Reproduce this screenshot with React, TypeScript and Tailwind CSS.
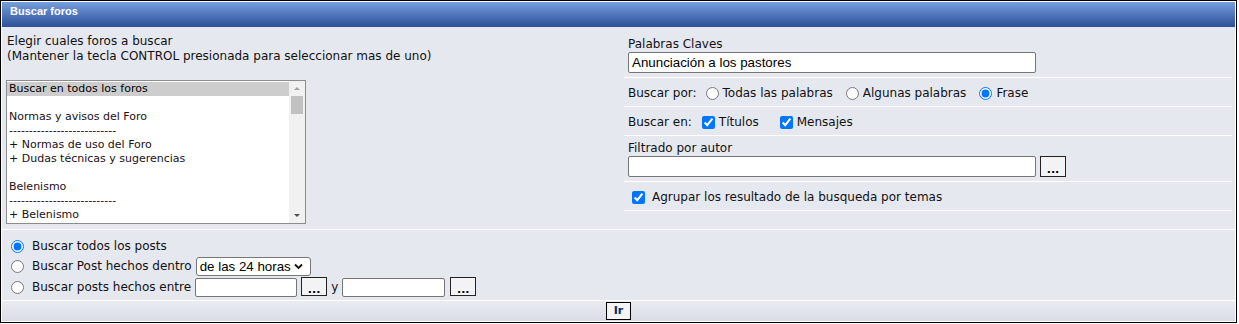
import React from "react";

const foros = [
  "Buscar en todos los foros",
  "",
  "Normas y avisos del Foro",
  "---------------------------",
  "+ Normas de uso del Foro",
  "+ Dudas técnicas y sugerencias",
  "",
  "Belenismo",
  "---------------------------",
  "+ Belenismo",
];

function DotsButton() {
  return (
    <button className="w-[26px] h-[19px] border border-[#222] bg-[#f3f3f5] text-[11px] font-bold leading-[19px] pt-[2px] font-['DejaVu_Sans',sans-serif] text-black">
      ...
    </button>
  );
}

export default function App() {
  return (
    <div className="w-[1237px] h-[323px] border border-black bg-white p-px flex flex-col font-['DejaVu_Sans',sans-serif] text-[12px] leading-[15px] text-[#111]">
      <div className="h-[25px] shrink-0 bg-linear-to-b from-[#769fde] to-[#2d5096] pl-[8px] pt-[2px] text-white text-[11px] font-bold leading-[14px] font-['Liberation_Sans',Arial,sans-serif]">
        Buscar foros
      </div>

      <div className="h-[202px] shrink-0 bg-[#e6e8f0] flex">
        <div className="w-[622px] pl-[4px] pt-[7px]">
          <div className="pl-[1px]">
            Elegir cuales foros a buscar
            <br />
            (Mantener la tecla CONTROL presionada para seleccionar mas de uno)
          </div>
          <div className="mt-[16px] w-[300px] h-[144px] border border-[#8c8c8c] bg-white flex">
            <div className="flex-1 overflow-hidden pt-px text-[11px] leading-[14px] text-[#1c1016]">
              {foros.map((f, i) => (
                <div
                  key={i}
                  className={
                    "h-[14px] pl-[2px] whitespace-pre " +
                    (i === 0 ? "bg-[#cdcdcd] text-black" : "")
                  }
                >
                  {f}
                </div>
              ))}
            </div>
            <div className="w-[16px] bg-[#f1f1f1] flex flex-col items-center">
              <svg width="16" height="14" viewBox="0 0 16 14">
                <path d="M5 9 L8 6 L11 9 Z" fill="#a3a3a3" />
              </svg>
              <div className="mt-[1px] w-[12px] h-[18px] bg-[#c1c1c1]" />
              <div className="flex-1" />
              <svg width="16" height="14" viewBox="0 0 16 14">
                <path d="M5 5 L8 8 L11 5 Z" fill="#505050" />
              </svg>
            </div>
          </div>
        </div>

        <div className="w-[608px] pt-[6px]">
          <div className="h-[45px] border-b border-white pl-[4px] pt-[4px]">
            <div>Palabras Claves</div>
            <div className="w-[408px] h-[21px] border border-[#767676] rounded-[2px] bg-white pl-[3px] flex items-center font-['Liberation_Sans',Arial,sans-serif] text-[13.33px] text-black">
              Anunciación a los pastores
            </div>
          </div>
          <div className="h-[29px] border-b border-white pl-[4px] pt-[3px] flex items-center">
            <span>Buscar por:</span>
            <input type="radio" name="por" className="ml-[9px] m-0 size-[13px]" />
            <span className="ml-[4px]">Todas las palabras</span>
            <input type="radio" name="por" className="ml-[13px] m-0 size-[13px]" />
            <span className="ml-[4px]">Algunas palabras</span>
            <input type="radio" name="por" defaultChecked className="ml-[13px] m-0 size-[13px]" />
            <span className="ml-[4px]">Frase</span>
          </div>
          <div className="h-[29px] border-b border-white pl-[4px] pt-[3px] flex items-center">
            <span>Buscar en:</span>
            <input type="checkbox" defaultChecked className="ml-[10px] m-0 size-[13px]" />
            <span className="ml-[4px]">Títulos</span>
            <input type="checkbox" defaultChecked className="ml-[21px] m-0 size-[13px]" />
            <span className="ml-[4px]">Mensajes</span>
          </div>
          <div className="h-[46px] border-b border-white pl-[4px] pt-[5px]">
            <div>Filtrado por autor</div>
            <div className="flex gap-[4px]">
              <div className="w-[408px] h-[21px] border border-[#767676] rounded-[2px] bg-white" />
              <button className="w-[26px] h-[21px] border border-[#222] bg-[#f3f3f5] text-[11px] font-bold leading-[21px] pt-[2px] text-black">
                ...
              </button>
            </div>
          </div>
          <div className="h-[29px] border-b border-white pl-[8px] pt-[2px] flex items-center">
            <input type="checkbox" defaultChecked className="m-0 size-[13px]" />
            <span className="ml-[7px]">Agrupar los resultado de la busqueda por temas</span>
          </div>
        </div>
      </div>

      <div className="h-px shrink-0 bg-white" />

      <div className="h-[70px] shrink-0 bg-[#e6e8f0] pl-[9px] pt-[6px]">
        <div className="h-[20px] flex items-center">
          <input type="radio" name="when" defaultChecked className="m-0 size-[13px]" />
          <span className="ml-[8px] pt-px">Buscar todos los posts</span>
        </div>
        <div className="h-[20px] flex items-center">
          <input type="radio" name="when" className="m-0 size-[13px]" />
          <span className="ml-[8px] pt-px">Buscar Post hechos dentro</span>
          <div className="ml-[4px] w-[115px] h-[19px] border border-[#767676] rounded-[3px] bg-white flex items-center pl-[3px] pr-[7px] font-['Liberation_Sans',Arial,sans-serif] text-[13.33px] text-black">
            <span className="flex-1 whitespace-nowrap">de las 24 horas</span>
            <svg width="9" height="7" viewBox="0 0 9 7" className="shrink-0">
              <path d="M1 1.5 L4.5 5 L8 1.5" fill="none" stroke="#111" strokeWidth="1.8" />
            </svg>
          </div>
        </div>
        <div className="h-[22px] flex items-center">
          <input type="radio" name="when" className="m-0 size-[13px]" />
          <span className="ml-[8px] pt-px">Buscar posts hechos entre</span>
          <div className="ml-[4px] w-[102px] h-[19px] border border-[#767676] rounded-[2px] bg-white" />
          <div className="ml-[4px]">
            <DotsButton />
          </div>
          <span className="ml-[4px] pt-px">y</span>
          <div className="ml-[4px] w-[103px] h-[19px] border border-[#767676] rounded-[2px] bg-white" />
          <div className="ml-[5px]">
            <DotsButton />
          </div>
        </div>
      </div>

      <div className="h-px shrink-0 bg-white" />

      <div className="h-[20px] shrink-0 bg-linear-to-b from-[#eaecf2] to-[#d9dce6] flex justify-center items-start pt-px">
        <button className="w-[25px] h-[18px] border border-black bg-[#f4f4f6] text-[11px] font-bold leading-[16px] text-[#0a2a66]">
          Ir
        </button>
      </div>
    </div>
  );
}
